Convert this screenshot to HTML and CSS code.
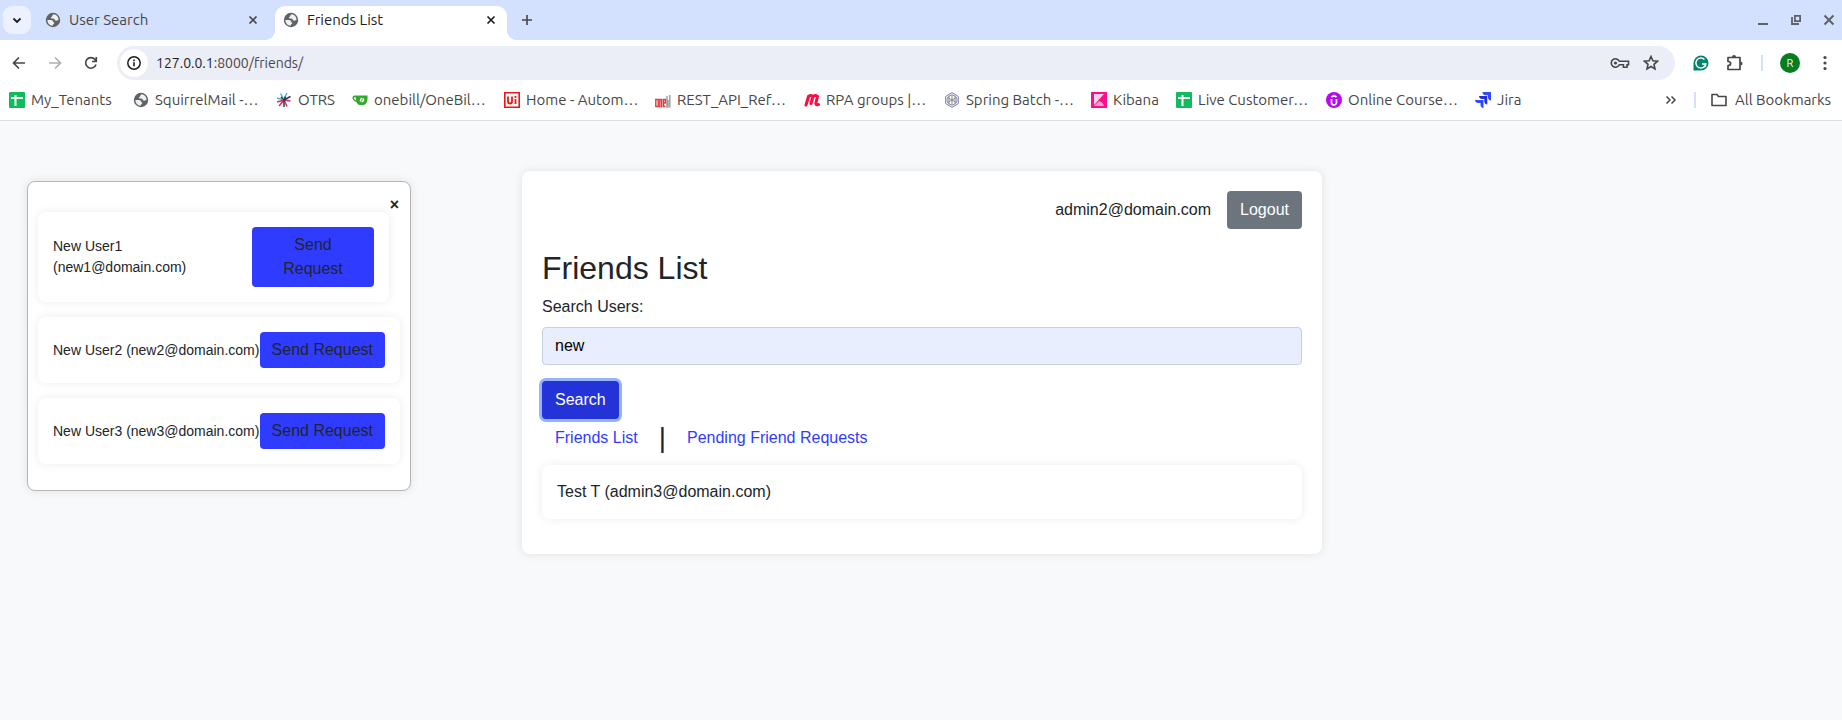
FILE: index.html
```html
<!DOCTYPE html>
<html lang="en">
<head>
<meta charset="utf-8">
<title>Friends List</title>
<link rel="stylesheet" href="styles.css">
</head>
<body>
<svg class="defs" aria-hidden="true">
  <symbol id="globe" viewBox="0 0 16 16"><circle cx="8" cy="8" r="7.200" fill="#5f6368"/><path d="M8.300 2.200C6.900 3.100 7.900 4.400 6.400 5c-.9.4-.6 1.500.5 1.600 1.500.1 2.700.2 3.100 1.500.3 1 1.500.7 1.900.300L13.600 8C13.600 4.800 11.300 2.300 8.300 2.200ZM2.400 8h3.400c1.600 0 2.500.8 2.500 2.200 1.300.2 1.200 1.300.4 1.700-.8.300-.9.900-.9 1.800C4.700 13.600 2.300 11 2.400 8Z" fill="#fff" opacity=".9"/></symbol>
  <symbol id="close" viewBox="0 0 16 16"><path d="M4.500 4.500l7 7M11.500 4.500l-7 7" stroke="currentColor" stroke-width="1.700"/></symbol>
  <symbol id="sheet" viewBox="0 0 16 16"><rect width="16" height="16" rx="1" fill="#0fbc5c"/><path d="M2 6h12M6.500 3v11" stroke="#fff" stroke-width="2"/></symbol>
</svg>
<header class="browser">
  <div class="tabstrip">
    <button class="tab-menu" aria-label="Search tabs"><svg viewBox="0 0 16 16"><path d="M4.500 6.500L8 10l3.500-3.500" fill="none" stroke="#1f1f1f" stroke-width="1.800"/></svg></button>
    <div class="tab"><svg><use href="#globe"/></svg><span class="tab-title">User Search</span><button class="plain" aria-label="Close User Search"><svg><use href="#close"/></svg></button></div>
    <div class="tab tab-active"><svg><use href="#globe"/></svg><span class="tab-title">Friends List</span><button class="plain" aria-label="Close Friends List"><svg><use href="#close"/></svg></button></div>
    <button class="plain new-tab" aria-label="New tab"><svg viewBox="0 0 16 16"><path d="M8 3v10M3 8h10" stroke="#474747" stroke-width="1.600"/></svg></button>
    <div class="window-controls">
      <button class="plain" aria-label="Minimize"><svg viewBox="0 0 16 16"><path d="M3 12h10" stroke="#5f6368" stroke-width="2"/></svg></button>
      <button class="plain" aria-label="Restore"><svg viewBox="0 0 16 16"><path d="M6.900 3.900h5.200v5.200H6.900zM4 5v7h7" fill="none" stroke="#5f6368" stroke-width="1.800"/></svg></button>
      <button class="plain" aria-label="Close window"><svg viewBox="0 0 16 16"><path d="M3.500 3.500l9 9M12.500 3.500l-9 9" stroke="#5f6368" stroke-width="2"/></svg></button>
    </div>
  </div>
  <div class="toolbar">
    <div class="history">
      <button class="plain" aria-label="Back"><svg viewBox="0 0 16 16"><path d="M14 8H3M8 2.500L2.500 8 8 13.500" fill="none" stroke="#474747" stroke-width="1.700"/></svg></button>
      <button class="plain" aria-label="Forward"><svg viewBox="0 0 16 16"><path d="M2 8h11M8 2.500L13.500 8 8 13.500" fill="none" stroke="#b0b0b0" stroke-width="1.700"/></svg></button>
      <button class="plain" aria-label="Reload"><svg viewBox="0 0 16 16"><path d="M13 9.500A5.300 5.300 0 1 1 12 4.500L13 6M13.300 2v4.500H9" fill="none" stroke="#474747" stroke-width="1.700"/></svg></button>
    </div>
    <div class="omnibox">
      <button class="site-info" aria-label="Site information"><svg viewBox="0 0 16 16"><circle cx="8" cy="8" r="6.200" fill="none" stroke="#1f1f1f" stroke-width="1.500"/><path d="M8 7.200v4M8 4.600v1.600" stroke="#1f1f1f" stroke-width="1.600"/></svg></button>
      <span class="url">127.0.0.1<span class="path">:8000/friends/</span></span>
      <button class="plain" aria-label="Passwords"><svg class="key" viewBox="0 0 20 16"><path d="M9.300 6.300h9.200v3.400H17v2.500h-3.600V9.700H9.300A4.200 4.200 0 1 1 9.300 6.300Z" fill="none" stroke="#474747" stroke-width="1.600"/><circle cx="5.500" cy="8" r="1.600" fill="#474747"/></svg></button>
      <button class="plain" aria-label="Bookmark this tab"><svg viewBox="0 0 16 16"><path d="M8 1.500l1.900 4.300 4.600.4-3.500 3.100 1 4.600L8 11.500l-4 2.400 1-4.600L1.500 6.200l4.600-.4z" fill="none" stroke="#474747" stroke-width="1.600"/></svg></button>
    </div>
    <div class="actions">
      <button class="plain" aria-label="Grammarly"><svg viewBox="0 0 16 16"><path d="M8 .5A7.500 7.500 0 1 1 8 15.500H.5V8A7.500 7.500 0 0 1 8 .5Z" fill="#00856c"/><path d="M11.500 4.500A5 5 0 1 0 12.800 9H9M12.500 8.300v3.500" fill="none" stroke="#fff" stroke-width="1.500"/></svg></button>
      <button class="plain" aria-label="Extensions"><svg class="puzzle" viewBox="0 0 18 18"><path d="M2 3.500h12v12H2v-4c3.500 0 3.500-4 0-4z" fill="none" stroke="#474747" stroke-width="1.700" stroke-linejoin="round"/><path d="M6 3a2 2 0 0 1 4 0zM14.500 7.500a2 2 0 0 1 0 4z" fill="#474747"/></svg></button>
      <span class="divider"></span>
      <button class="avatar">R</button>
      <button class="plain" aria-label="Menu"><svg viewBox="0 0 16 16" fill="#474747"><circle cx="8" cy="2.500" r="1.600"/><circle cx="8" cy="8" r="1.600"/><circle cx="8" cy="13.500" r="1.600"/></svg></button>
    </div>
  </div>
  <nav class="bookmarks" aria-label="Bookmarks">
    <a href="#"><svg><use href="#sheet"/></svg>My_Tenants</a>
    <a href="#"><svg><use href="#globe"/></svg>SquirrelMail -…</a>
    <a href="#"><svg viewBox="0 0 16 16" fill="none" stroke-width="1.500"><path d="M8 8L3 14M8 8l6.500 1M8 8l3 6.500M8 8L1 10" stroke="#d2335c"/><path d="M7 6L4.500 1.500M8.500 6L11 1M6 7.500L1 6" stroke="#56b4cc"/><path d="M8 8l6.500-3.500M8 8v7M8 8L5 5M8 8l1.500-3.500" stroke="#33384a"/></svg>OTRS</a>
    <a href="#"><svg viewBox="0 0 16 16"><path d="M4 3.500h11.500c.5 6-1.500 9.500-4 9.500H8c-2 0-3-1.500-3.500-3C1.500 9.500.5 7.500.5 5.500.5 4 2 3.500 4 3.500Z" fill="#34a82c"/><path d="M2 5.500c0 1.500.7 2.500 2 3L3.500 5z" fill="#fff"/><rect x="8" y="6" width="4" height="4" rx="1" transform="rotate(25 10 8)" fill="#fff"/><path d="M10.500 6.500L9.500 9.500" stroke="#34a82c"/></svg>onebill/OneBil…</a>
    <a href="#"><svg viewBox="0 0 16 16"><path d="M.8.8h14.400v14.400H.8z" fill="#fff" stroke="#f01414" stroke-width="1.600"/><path d="M4 4.500v5a2 2 0 0 0 4 0v-5M11.500 7v5M11.500 4v2" fill="none" stroke="#f01414" stroke-width="1.800"/></svg>Home - Autom…</a>
    <a href="#"><svg viewBox="0 0 16 16" fill="none" stroke-width="1.400"><path d="M.8 7.500h2.400v7H.8zM4.800 15.500v-8h1.800v8M10.500 11.500V7.500H8.500v7h2M8.500 11h2" stroke="#e03a3a"/><path d="M12 4v11h1V8M14.800 3v12.500" stroke="#999"/></svg>REST_API_Ref…</a>
    <a href="#"><svg viewBox="0 0 16 16"><path d="M2 13L4.500 4.500M7 11.500L9 4.500M4.500 4.500Q7 2.500 9 4.500q3-2 4.500 0L11.800 11.500q.7 2 2.700 1" fill="none" stroke="#ff0a43" stroke-width="3" stroke-linecap="round" stroke-linejoin="round"/></svg>RPA groups |…</a>
    <a href="#"><svg viewBox="0 0 16 16" fill="none" stroke="#7d7bbd"><path d="M8 .7l6.300 3.700v7.200L8 15.300l-6.300-3.700V4.400z"/><circle cx="8" cy="8" r="5" stroke="#85898f"/><path d="M8 3v10M3.700 5.500l8.600 5M12.300 5.500l-8.600 5M5 4v8M11 4v8" stroke="#85898f"/></svg>Spring Batch -…</a>
    <a href="#"><svg viewBox="0 0 16 16"><path d="M0 0h16v16H0z" fill="#fa0f8c"/><path d="M3 2h10L3 13z" fill="#ffd0e8"/><path d="M3 14l5-5q4 1 5 5z" fill="#ff9ccf"/></svg>Kibana</a>
    <a href="#"><svg><use href="#sheet"/></svg>Live Customer…</a>
    <a href="#"><svg viewBox="0 0 16 16"><circle cx="8" cy="8" r="8" fill="#b908f0"/><path d="M5.500 7v3.500a2.500 2.500 0 0 0 5 0V7M5.500 5L8 3.500 10.500 5" fill="none" stroke="#fff" stroke-width="1.700"/></svg>Online Course…</a>
    <a href="#"><svg viewBox="0 0 16 16"><path d="M7.500 0H16v8.500c-2 0-3-1.500-3-3V3.200h-2.500c-2 0-3-1.500-3-3.200Z" fill="#2e4bff"/><path d="M4 4h8.300v8.500c-2 0-3-1.500-3-3V7H7C5 7 4 5.500 4 4Z" fill="#2230d8"/><path d="M0 8h8.500v8c-2 0-3-1.500-3-3v-2H3c-2 0-3-1.500-3-3Z" fill="#2e4bff"/></svg>Jira</a>
    <button class="plain more" aria-label="More bookmarks"><svg viewBox="0 0 16 16"><path d="M3.500 4.500L7 8l-3.500 3.500M8.500 4.500L12 8l-3.500 3.500" fill="none" stroke="#474747" stroke-width="1.500"/></svg></button>
    <span class="divider"></span>
    <a class="all" href="#"><svg viewBox="0 0 16 16"><path d="M1 2.500h5l1.500 2H15v9H1z" fill="none" stroke="#474747" stroke-width="1.600" stroke-linejoin="round"/></svg>All Bookmarks</a>
  </nav>
</header>
<div class="page">
  <aside class="popup" aria-label="Search results">
    <button class="popup-close" aria-label="Close">×</button>
    <ul class="cards">
      <li class="card card-first"><span>New User1 (new1@domain.com)</span><button class="send">Send Request</button></li>
      <li class="card"><span>New User2 (new2@domain.com)</span><button class="send">Send Request</button></li>
      <li class="card"><span>New User3 (new3@domain.com)</span><button class="send">Send Request</button></li>
    </ul>
  </aside>
  <main class="panel">
    <div class="account"><span>admin2@domain.com</span><button class="btn btn-secondary">Logout</button></div>
    <h1>Friends List</h1>
    <form class="search">
      <label for="query">Search Users:</label>
      <input id="query" type="text" value="new">
      <button class="btn btn-primary" type="button">Search</button>
    </form>
    <nav class="views" aria-label="Lists"><a href="#">Friends List</a><span class="bar">|</span><a href="#">Pending Friend Requests</a></nav>
    <ul class="cards"><li class="card">Test T (admin3@domain.com)</li></ul>
  </main>
</div>
</body>
</html>
```
FILE: styles.css
```css
* { box-sizing: border-box; }
body {
  margin: 0;
  min-height: 100vh;
  background: #f8f9fa;
  color: #212529;
  font: 16px/24px "Liberation Sans", Arial, sans-serif;
}
button, input { font: inherit; color: inherit; }
button { border: 0; padding: 0; cursor: pointer; }
a { text-decoration: none; }
ul { list-style: none; margin: 0; padding: 0; }
svg { display: block; flex: none; width: 16px; height: 16px; }
.defs { position: absolute; width: 0; height: 0; }
.plain { background: none; color: inherit; }

/* Browser chrome */
.browser {
  background: #fff;
  border-bottom: 1px solid #dadfe0;
  color: #474747;
  font: 15px/20px Ubuntu, "Noto Sans", sans-serif;
}
.tabstrip {
  display: flex;
  align-items: center;
  height: 40px;
  padding: 0 5px 0 3px;
  background: #d3e0fe;
}
.tab-menu {
  display: grid;
  place-items: center;
  width: 28px;
  height: 28px;
  border-radius: 9px;
  background: #ebf1ff;
}
.tab {
  display: flex;
  align-items: center;
  gap: 8px;
  width: 230px;
  height: 34px;
  margin-top: 6px;
  padding: 0 0 6px 14px;
}
.tab-title { flex: 1; }
.tab-active {
  position: relative;
  width: 232px;
  margin-left: 14px;
  padding: 0 8px 6px;
  border-radius: 10px 10px 0 0;
  background: #fff;
  color: #1f1f1f;
}
.tab-active::before, .tab-active::after {
  content: "";
  position: absolute;
  bottom: 0;
  width: 10px;
  height: 10px;
}
.tab-active::before { right: 100%; background: radial-gradient(circle at 0 0, transparent 10px, #fff 10px); }
.tab-active::after { left: 100%; background: radial-gradient(circle at 100% 0, transparent 10px, #fff 10px); }
.new-tab { margin-left: 12px; }
.window-controls { display: flex; gap: 17px; margin-left: auto; }
.toolbar {
  display: flex;
  align-items: center;
  gap: 18px;
  height: 46px;
  padding: 0 9px 0 11px;
}
.history { display: flex; gap: 20px; }
.omnibox {
  display: flex;
  flex: 1;
  align-items: center;
  gap: 13px;
  height: 34px;
  padding: 0 16px 0 3px;
  border-radius: 17px;
  background: #ebedf7;
}
.site-info {
  display: grid;
  place-items: center;
  width: 28px;
  height: 28px;
  border-radius: 50%;
  background: #fff;
}
.url { flex: 1; margin-left: -5px; color: #1f1f1f; font-size: 14px; }
.path { color: #474747; }
.key { width: 20px; }
.actions { display: flex; align-items: center; gap: 17px; }
.puzzle { width: 18px; height: 18px; }
.divider { width: 2px; height: 16px; background: #d3e0fe; }
.avatar {
  width: 20px;
  height: 20px;
  border-radius: 50%;
  background: #067d21;
  color: #fff;
  font-size: 11px;
  line-height: 20px;
}
.bookmarks {
  display: grid;
  grid-template-columns: 124px 143px 76px 152px 151px 149px 140px 147px 85px 150px 149px 60px 1fr 17px 123px;
  align-items: center;
  height: 34px;
  padding: 0 8px 6px 9px;
}
.bookmarks a {
  display: flex;
  align-items: center;
  gap: 6px;
  color: #474747;
  white-space: nowrap;
}
.bookmarks .all { gap: 8px; }
.more { justify-self: end; margin-right: 15px; }

/* Page */
.page { position: relative; padding: 50px 0 50px 2px; }
.popup {
  position: absolute;
  top: 60px;
  left: 27px;
  width: 384px;
  padding: 30px 10px 11px;
  border: 1px solid #b4b6b8;
  border-radius: 8px;
  background: #fff;
  box-shadow: 0 0 10px rgba(0, 0, 0, .1);
  font-size: 14px;
  line-height: 21px;
}
.popup-close {
  position: absolute;
  top: 12px;
  right: 11px;
  background: none;
  font-size: 16px;
  font-weight: bold;
}
.card {
  display: flex;
  align-items: center;
  justify-content: space-between;
  margin-bottom: 15px;
  padding: 15px;
  border-radius: 8px;
  background: #fff;
  box-shadow: 0 0 10px rgba(0, 0, 0, .08);
}
.card-first { margin-right: 11px; }
.popup .card:not(.card-first) { white-space: nowrap; }
.card-first span { max-width: 150px; }
.card-first .send { width: 122px; }
.send {
  padding: 6px 12px;
  border-radius: 4px;
  background: #2f3cff;
  color: #212529;
  font-size: 16px;
  line-height: 24px;
}
.panel {
  max-width: 800px;
  margin: 0 auto;
  padding: 20px;
  border-radius: 8px;
  background: #fff;
  box-shadow: 0 0 10px rgba(0, 0, 0, .1);
}
.account {
  display: flex;
  align-items: center;
  justify-content: flex-end;
  gap: 16px;
  margin-bottom: 20px;
}
h1 { margin: 0 0 8px; font-size: 32px; font-weight: 400; line-height: 38px; }
.btn { padding: 7px 13px; border-radius: 4px; color: #fff; }
.btn-secondary { background: #6c757d; }
.btn-primary { background: #2433d8; box-shadow: 0 0 0 3px #94b3fe; }
.search label { display: block; margin-bottom: 8px; }
.search input {
  display: block;
  width: 100%;
  height: 38px;
  margin-bottom: 16px;
  padding: 6px 12px;
  border: 1px solid #c8d0dc;
  border-radius: 4px;
  background: #e8eefe;
  color: #000;
}
.views {
  display: flex;
  align-items: center;
  gap: 8px;
  height: 38px;
  margin-bottom: 8px;
}
.views a { padding: 0 13px; color: #2f3cff; }
.bar { font-size: 28px; }
```
